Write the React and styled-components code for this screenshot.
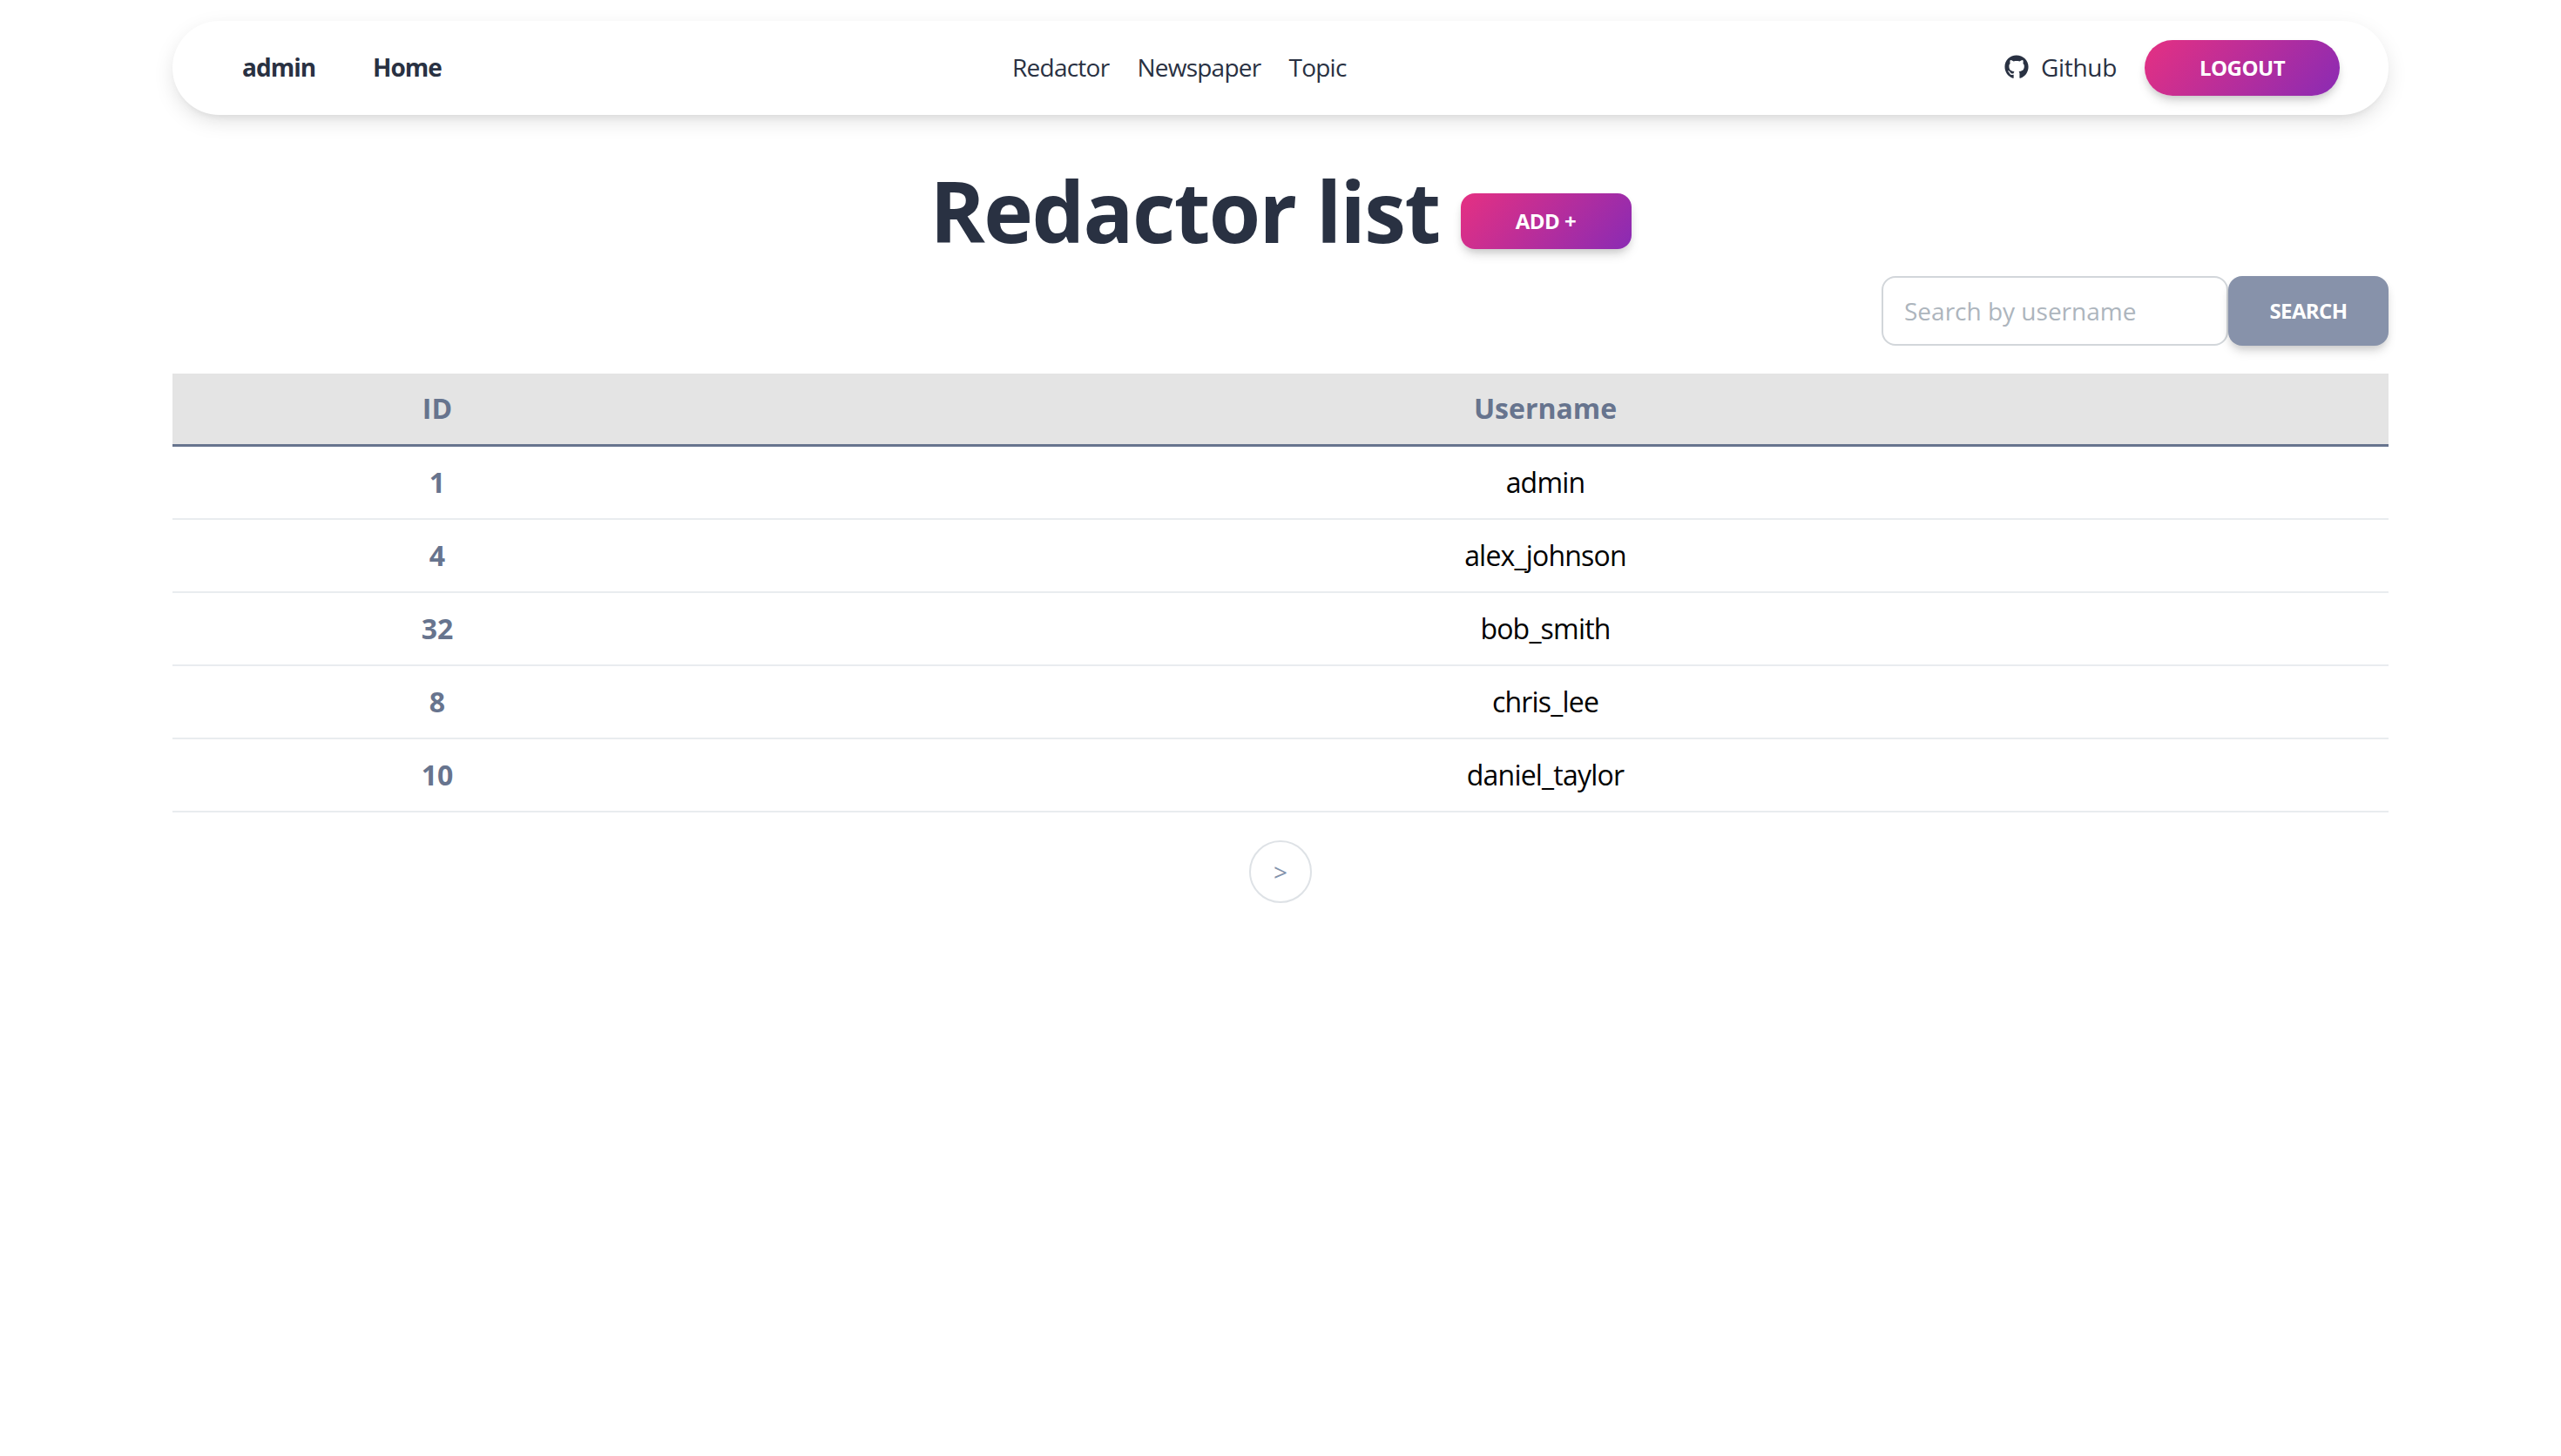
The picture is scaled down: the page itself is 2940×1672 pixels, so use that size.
import React from 'react'
import styled, { createGlobalStyle } from 'styled-components'
import { FaGithub } from 'react-icons/fa'

const redactors = [
  { id: 1, username: 'admin' },
  { id: 4, username: 'alex_johnson' },
  { id: 32, username: 'bob_smith' },
  { id: 8, username: 'chris_lee' },
  { id: 10, username: 'daniel_taylor' },
]

const GlobalStyle = createGlobalStyle`
  html, body {
    margin: 0;
    background: #fff;
    font-family: "Open Sans", "Noto Sans", sans-serif;
    color: #293142;
  }
`

const Page = styled.div`
  width: 2544px;
  min-height: 1672px;
  margin: 0 auto;
  padding-top: 24px;
  box-sizing: border-box;
`

const Nav = styled.nav`
  height: 108px;
  display: grid;
  grid-template-columns: 884px auto 1fr;
  align-items: center;
  padding: 0 56px 0 80px;
  border-radius: 54px;
  background: #fff;
  box-shadow: 0 8px 26px -4px rgba(20, 20, 20, 0.15), 0 8px 9px -5px rgba(20, 20, 20, 0.06);
`

const NavLeft = styled.div`
  display: flex;
  align-items: center;
  gap: 66px;
`

const NavCenter = styled.div`
  display: flex;
  align-items: center;
  gap: 32px;
`

const NavRight = styled.div`
  display: flex;
  align-items: center;
  justify-content: flex-end;
  gap: 32px;
`

const BrandLink = styled.a`
  padding-bottom: 2px;
  font-size: 28px;
  font-weight: 700;
  letter-spacing: -1px;
  color: #293142;
`

const NavLink = styled.a`
  display: flex;
  align-items: center;
  gap: 14px;
  padding-bottom: 2px;
  font-size: 28px;
  letter-spacing: -0.75px;
  color: #293142;
`

const GithubLink = styled(NavLink)`
  letter-spacing: -0.3px;
`

const GradientButton = styled.button`
  height: 64px;
  width: ${(props) => props.width}px;
  padding: 0 0 2px;
  border: 0;
  border-radius: ${(props) => props.radius}px;
  background: linear-gradient(310deg, #8a2bb4, #e53082);
  color: #fff;
  font-family: inherit;
  font-size: 24px;
  font-weight: 700;
  letter-spacing: -0.5px;
  text-transform: uppercase;
  box-shadow: 0 8px 14px -4px rgba(20, 20, 20, 0.2), 0 4px 8px -2px rgba(20, 20, 20, 0.1);
`

const TitleRow = styled.div`
  display: flex;
  justify-content: center;
  align-items: center;
  gap: 24px;
  margin-top: 44px;
  height: 132px;
`

const Title = styled.h1`
  margin: 0;
  font-size: 96px;
  line-height: 132px;
  font-weight: 700;
  letter-spacing: -1.6px;
  color: #293142;
`

const AddWrap = styled.div`
  padding-top: 24px;
`

const SearchForm = styled.form`
  display: flex;
  justify-content: flex-end;
  margin-top: 9px;
`

const SearchInput = styled.input`
  width: 398px;
  height: 80px;
  box-sizing: border-box;
  padding: 0 24px;
  border: 2px solid #d2d6da;
  border-radius: 16px;
  font-family: inherit;
  font-size: 28px;
  color: #293142;
  outline: none;

  &::placeholder {
    color: #adb5bd;
    opacity: 1;
  }
`

const SearchButton = styled.button`
  width: 184px;
  height: 80px;
  padding: 0 0 2px;
  border: 0;
  border-radius: 16px;
  background: #8792aa;
  color: #fff;
  font-family: inherit;
  font-size: 24px;
  font-weight: 700;
  letter-spacing: -0.6px;
  text-transform: uppercase;
  box-shadow: 0 8px 14px -4px rgba(20, 20, 20, 0.2), 0 4px 8px -2px rgba(20, 20, 20, 0.1);
`

const Table = styled.table`
  width: 100%;
  margin-top: 32px;
  border-collapse: collapse;
  table-layout: fixed;
`

const HeadCell = styled.th`
  width: ${(props) => (props.narrow ? '608px' : 'auto')};
  height: 79px;
  padding: 0 0 2px;
  background: #e4e4e4;
  border-bottom: 3px solid #67748e;
  color: #67748e;
  font-size: 32px;
  font-weight: 700;
  text-align: center;
`

const IdCell = styled.td`
  height: 80px;
  padding: 0 0 2px;
  border-bottom: 2px solid #e9ecef;
  color: #67748e;
  font-size: 32px;
  font-weight: 700;
  text-align: center;
`

const NameCell = styled.td`
  height: 80px;
  padding: 0 0 2px;
  border-bottom: 2px solid #e9ecef;
  color: #000;
  font-size: 32px;
  letter-spacing: -0.8px;
  text-align: center;
`

const Pager = styled.div`
  display: flex;
  justify-content: center;
  margin-top: 32px;
`

const PageButton = styled.button`
  width: 72px;
  height: 72px;
  padding: 0;
  border: 2px solid #dee2e6;
  border-radius: 50%;
  background: #fff;
  color: #8392ab;
  font-family: inherit;
  font-size: 28px;
`

export default function App() {
  return (
    <>
      <GlobalStyle />
      <Page>
        <Nav>
          <NavLeft>
            <BrandLink>admin</BrandLink>
            <BrandLink>Home</BrandLink>
          </NavLeft>
          <NavCenter>
            <NavLink>Redactor</NavLink>
            <NavLink>Newspaper</NavLink>
            <NavLink>Topic</NavLink>
          </NavCenter>
          <NavRight>
            <GithubLink>
              <FaGithub size={28} />
              Github
            </GithubLink>
            <GradientButton width={224} radius={32}>Logout</GradientButton>
          </NavRight>
        </Nav>

        <TitleRow>
          <Title>Redactor list</Title>
          <AddWrap>
            <GradientButton width={196} radius={16}>Add +</GradientButton>
          </AddWrap>
        </TitleRow>

        <SearchForm>
          <SearchInput placeholder="Search by username" />
          <SearchButton type="button">Search</SearchButton>
        </SearchForm>

        <Table>
          <thead>
            <tr>
              <HeadCell narrow>ID</HeadCell>
              <HeadCell>Username</HeadCell>
            </tr>
          </thead>
          <tbody>
            {redactors.map((r) => (
              <tr key={r.id}>
                <IdCell>{r.id}</IdCell>
                <NameCell>{r.username}</NameCell>
              </tr>
            ))}
          </tbody>
        </Table>

        <Pager>
          <PageButton>&gt;</PageButton>
        </Pager>
      </Page>
    </>
  )
}
